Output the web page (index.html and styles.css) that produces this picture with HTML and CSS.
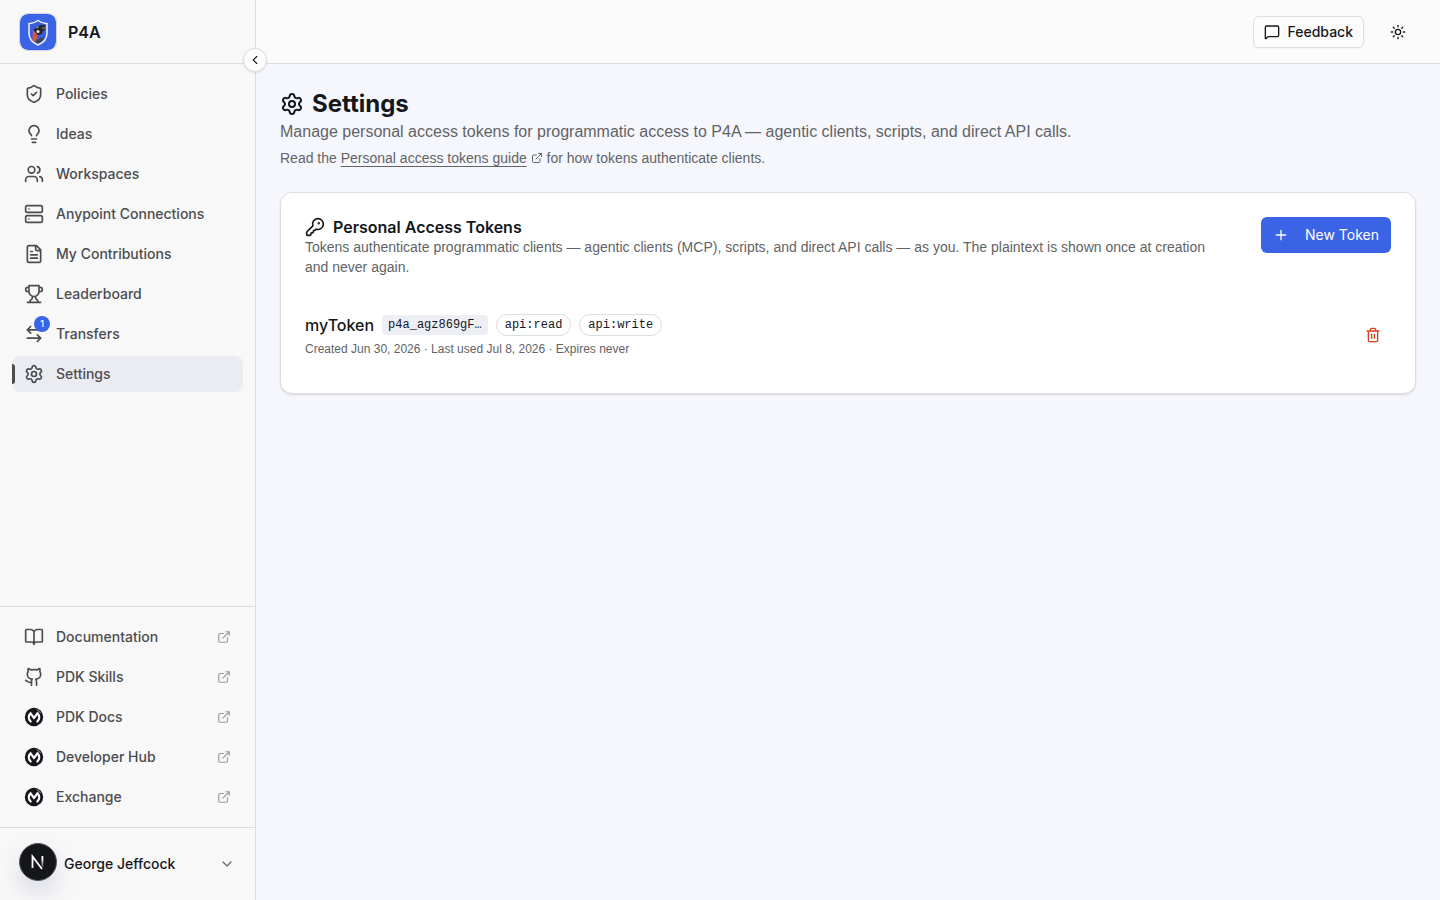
FILE: index.html
```html
<!DOCTYPE html>
<html lang="en">
<head>
  <meta charset="UTF-8" />
  <meta name="viewport" content="width=device-width, initial-scale=1.0" />
  <title>Settings - P4A</title>
  <link rel="stylesheet" href="styles.css">
</head>
<body>
  <!-- shared icons -->
  <svg class="sprite" aria-hidden="true">
    <symbol id="external" viewBox="0 0 24 24">
      <path d="M15 3h6v6M10 14 21 3M18 13v6a2 2 0 0 1-2 2H5a2 2 0 0 1-2-2V8a2 2 0 0 1 2-2h6" />
    </symbol>
    <symbol id="gear" viewBox="0 0 24 24">
      <path d="M9.671 4.136a2.34 2.34 0 0 1 4.659 0 2.34 2.34 0 0 0 3.319 1.915 2.34 2.34 0 0 1 2.33 4.033 2.34 2.34 0 0 0 0 3.831 2.34 2.34 0 0 1-2.33 4.033 2.34 2.34 0 0 0-3.319 1.915 2.34 2.34 0 0 1-4.659 0 2.34 2.34 0 0 0-3.32-1.915 2.34 2.34 0 0 1-2.33-4.033 2.34 2.34 0 0 0 0-3.831A2.34 2.34 0 0 1 6.35 6.051a2.34 2.34 0 0 0 3.319-1.915" />
      <circle cx="12" cy="12" r="3" />
    </symbol>
    <symbol id="mulesoft" viewBox="0 0 24 24">
      <circle cx="12" cy="12" r="11" fill="#15171c" stroke="none" />
      <path d="M8 17.4A6.8 6.8 0 0 1 7.8 7.4L12 13.4l4.2-6a6.8 6.8 0 0 1-.2 10" fill="none" stroke="#fff" stroke-width="2.6" />
      <path d="M16 3.6a9 9 0 0 1 3.6 3.2" fill="none" stroke="#fff" stroke-width="0.8" />
    </symbol>
  </svg>

  <div class="app">
    <aside class="sidebar">
      <div class="brand">
        <svg class="logo" viewBox="0 0 36 36">
          <rect width="36" height="36" rx="8" fill="#3b63e6" />
          <path d="M18 6.5c3 2.2 6 3 9 3.2V19c0 6-4 10-9 12-5-2-9-6-9-12V9.7c3-.2 6-1 9-3.2z" fill="#3b5fdc" stroke="#f2f3f5" stroke-width="1.5" />
          <path d="M13 17l3-2 1 9-2 4-2.5-2z" fill="#e3532d" />
          <path d="M14 15l4-2 2-2h5v5l-2 1-1 3-4 1-4-4z" fill="#25282c" />
          <path d="M15 28l3-3 6-2-2 4-4 2.5z" fill="#3f4446" />
          <circle cx="18" cy="17.5" r="1.5" fill="#e8e8e8" />
          <path d="M16 14l3-1M22 14h3" stroke="#8d9296" />
        </svg>
        <span>P4A</span>
      </div>
      <button class="collapse" aria-label="Collapse sidebar">
        <svg class="icon" viewBox="0 0 24 24"><path d="m15 18-6-6 6-6" /></svg>
      </button>

      <nav class="nav main-nav" aria-label="Main">
        <a href="#"><svg class="icon" viewBox="0 0 24 24"><path d="M20 13c0 5-3.5 7.5-7.66 8.95a1 1 0 0 1-.67-.01C7.5 20.5 4 18 4 13V6a1 1 0 0 1 1-1c2 0 4.5-1.2 6.24-2.72a1.17 1.17 0 0 1 1.52 0C14.51 3.81 17 5 19 5a1 1 0 0 1 1 1z" /><path d="m9 12 2 2 4-4" /></svg>Policies</a>
        <a href="#"><svg class="icon" viewBox="0 0 24 24"><path d="M15 14c.2-1 .7-1.7 1.5-2.5 1-.9 1.5-2.2 1.5-3.5A6 6 0 0 0 6 8c0 1 .2 2.2 1.5 3.5.7.7 1.3 1.5 1.5 2.5M9 18h6M10 22h4" /></svg>Ideas</a>
        <a href="#"><svg class="icon" viewBox="0 0 24 24"><path d="M16 21v-2a4 4 0 0 0-4-4H6a4 4 0 0 0-4 4v2" /><circle cx="9" cy="7" r="4" /><path d="M22 21v-2a4 4 0 0 0-3-3.87M16 3.13a4 4 0 0 1 0 7.75" /></svg>Workspaces</a>
        <a href="#"><svg class="icon" viewBox="0 0 24 24"><rect width="20" height="8" x="2" y="2" rx="2" /><rect width="20" height="8" x="2" y="14" rx="2" /><path d="M6 6h.01M6 18h.01" /></svg>Anypoint Connections</a>
        <a href="#"><svg class="icon" viewBox="0 0 24 24"><path d="M15 2H6a2 2 0 0 0-2 2v16a2 2 0 0 0 2 2h12a2 2 0 0 0 2-2V7zM14 2v4a2 2 0 0 0 2 2h4M10 9H8M16 13H8M16 17H8" /></svg>My Contributions</a>
        <a href="#"><svg class="icon" viewBox="0 0 24 24"><path d="M6 9H4.5a2.5 2.5 0 0 1 0-5H6M18 9h1.5a2.5 2.5 0 0 0 0-5H18M4 22h16M10 14.66V17c0 .55-.47.98-.97 1.21C7.85 18.75 7 20.24 7 22M14 14.66V17c0 .55.47.98.97 1.21C16.15 18.75 17 20.24 17 22M18 2H6v7a6 6 0 0 0 12 0V2Z" /></svg>Leaderboard</a>
        <a href="#"><span class="icon-wrap"><svg class="icon" viewBox="0 0 24 24"><path d="M8 3 4 7l4 4M4 7h16M16 21l4-4-4-4M20 17H4" /></svg><span class="count">1</span></span>Transfers</a>
        <a href="#" class="active" aria-current="page"><svg class="icon"><use href="#gear" /></svg>Settings</a>
      </nav>

      <nav class="nav links" aria-label="Resources">
        <a href="#"><svg class="icon" viewBox="0 0 24 24"><path d="M12 7v14M3 18a1 1 0 0 1-1-1V4a1 1 0 0 1 1-1h5a4 4 0 0 1 4 4 4 4 0 0 1 4-4h5a1 1 0 0 1 1 1v13a1 1 0 0 1-1 1h-6a3 3 0 0 0-3 3 3 3 0 0 0-3-3z" /></svg>Documentation<svg class="icon ext"><use href="#external" /></svg></a>
        <a href="#"><svg class="icon" viewBox="0 0 24 24"><path d="M15 22v-4a4.8 4.8 0 0 0-1-3.5c3 0 6-2 6-5.5.08-1.25-.27-2.48-1-3.5.28-1.15.28-2.35 0-3.5 0 0-1 0-3 1.5-2.64-.5-5.36-.5-8 0C6 2 5 2 5 2c-.3 1.15-.3 2.35 0 3.5A5.4 5.4 0 0 0 4 9c0 3.5 3 5.5 6 5.5-.39.49-.68 1.05-.85 1.65S8.93 17.38 9 18v4" /><path d="M9 18c-4.51 2-5-2-7-2" /></svg>PDK Skills<svg class="icon ext"><use href="#external" /></svg></a>
        <a href="#"><svg class="icon"><use href="#mulesoft" /></svg>PDK Docs<svg class="icon ext"><use href="#external" /></svg></a>
        <a href="#"><svg class="icon"><use href="#mulesoft" /></svg>Developer Hub<svg class="icon ext"><use href="#external" /></svg></a>
        <a href="#"><svg class="icon"><use href="#mulesoft" /></svg>Exchange<svg class="icon ext"><use href="#external" /></svg></a>
      </nav>

      <div class="account">
        <button class="user">
          George Jeffcock
          <svg class="icon" viewBox="0 0 24 24"><path d="m6 9 6 6 6-6" /></svg>
        </button>
      </div>
    </aside>

    <div class="page">
      <header class="topbar">
        <button class="feedback"><svg class="icon" viewBox="0 0 24 24"><path d="M22 17a2 2 0 0 1-2 2H6.828a2 2 0 0 0-1.414.586l-2.202 2.202A.71.71 0 0 1 2 21.286V5a2 2 0 0 1 2-2h16a2 2 0 0 1 2 2z" /></svg>Feedback</button>
        <button class="theme" aria-label="Toggle theme"><svg class="icon" viewBox="0 0 24 24"><circle cx="12" cy="12" r="4" /><path d="M12 2v2M12 20v2M4.93 4.93l1.41 1.41M17.66 17.66l1.41 1.41M2 12h2M20 12h2M6.34 17.66l-1.41 1.41M19.07 4.93l-1.41 1.41" /></svg></button>
      </header>

      <main>
        <h1><svg class="icon"><use href="#gear" /></svg>Settings</h1>
        <p class="lead">Manage personal access tokens for programmatic access to P4A — agentic clients, scripts, and direct API calls.</p>
        <p class="guide">Read the <a href="#">Personal access tokens guide</a> <svg class="icon"><use href="#external" /></svg> for how tokens authenticate clients.</p>

        <section class="card">
          <div class="card-header">
            <div>
              <h2><svg class="icon" viewBox="0 0 24 24"><path d="M2.586 17.414A2 2 0 0 0 2 18.828V21a1 1 0 0 0 1 1h3a1 1 0 0 0 1-1v-1a1 1 0 0 1 1-1h1a1 1 0 0 0 1-1v-1a1 1 0 0 1 1-1h.172a2 2 0 0 0 1.414-.586l.814-.814a6.5 6.5 0 1 0-4-4z" /><circle cx="16.5" cy="7.5" r=".5" fill="currentColor" /></svg>Personal Access Tokens</h2>
              <p>Tokens authenticate programmatic clients — agentic clients (MCP), scripts, and direct API calls — as you. The plaintext is shown once at creation and never again.</p>
            </div>
            <button class="primary"><svg class="icon" viewBox="0 0 24 24"><path d="M5 12h14M12 5v14" /></svg>New Token</button>
          </div>

          <div class="token">
            <div>
              <div class="token-name">
                <span>myToken</span>
                <code>p4a_agz869gF…</code>
                <span class="scope">api:read</span>
                <span class="scope">api:write</span>
              </div>
              <p>Created Jun 30, 2026 · Last used Jul 8, 2026 · Expires never</p>
            </div>
            <button class="delete" aria-label="Delete myToken"><svg class="icon" viewBox="0 0 24 24"><path d="M3 6h18M19 6v14a2 2 0 0 1-2 2H7a2 2 0 0 1-2-2V6M8 6V4a2 2 0 0 1 2-2h4a2 2 0 0 1 2 2v2M10 11v6M14 11v6" /></svg></button>
          </div>
        </section>
      </main>
    </div>
  </div>

  <!-- dev tools badge, floats over the page -->
  <button class="dev-badge" aria-label="Open dev tools">
    <svg viewBox="0 0 38 38">
      <defs><linearGradient id="fade" x1="0" y1="0" x2="0" y2="1"><stop offset="0.3" stop-color="#fff" /><stop offset="1" stop-color="#fff" stop-opacity="0.2" /></linearGradient></defs>
      <circle cx="19" cy="19" r="18.5" fill="#15161a" stroke="#55575b" />
      <path d="M13.5 25V13.5L23 26" fill="none" stroke="#fff" stroke-width="1.8" />
      <rect x="22.5" y="13" width="1.8" height="11" fill="url(#fade)" />
    </svg>
  </button>
</body>
</html>
```

FILE: styles.css
```css
* {
  box-sizing: border-box;
}
body {
  margin: 0;
  font-family: Inter, "Liberation Sans", sans-serif;
  font-size: 14px;
  line-height: 20px;
  color: #15171c;
  background-color: #f6f7fd;
}
h1, h2, p {
  margin: 0;
}
p {
  font-family: "Liberation Sans", Arial, sans-serif;
}
a {
  color: inherit;
}
button {
  display: flex;
  align-items: center;
  justify-content: center;
  padding: 0;
  font-family: inherit;
  font-size: 14px;
  line-height: 20px;
  font-weight: 500;
  color: inherit;
  background: none;
  border: none;
  cursor: pointer;
}
.sprite {
  display: none;
}
.icon {
  width: 16px;
  height: 16px;
  flex-shrink: 0;
  fill: none;
  stroke: currentColor;
  stroke-width: 2;
  stroke-linecap: round;
  stroke-linejoin: round;
}
.app {
  display: flex;
  min-height: 100vh;
}

/* sidebar */
.sidebar {
  position: relative;
  display: flex;
  flex-direction: column;
  width: 256px;
  flex-shrink: 0;
  background-color: #f8f8f8;
  border-right: 1px solid #dcdde0;
}
.brand {
  display: flex;
  align-items: center;
  gap: 12px;
  height: 64px;
  padding: 0 20px;
  font-size: 16px;
  font-weight: 600;
  border-bottom: 1px solid #dcdde0;
}
.logo {
  width: 36px;
  height: 36px;
  border-radius: 8px;
  box-shadow: 0 0 0 1px #d3d6e2;
}
.collapse {
  position: absolute;
  top: 48px;
  right: -12px;
  width: 24px;
  height: 24px;
  background-color: #fcfcfc;
  border: 1px solid #dcdde0;
  border-radius: 50%;
  box-shadow: 0 1px 2px #0000001a;
}
.collapse .icon {
  width: 14px;
  height: 14px;
}
.nav {
  display: flex;
  flex-direction: column;
  gap: 4px;
  padding: 12px;
}
.main-nav {
  flex: 1;
}
.nav a {
  position: relative;
  display: flex;
  align-items: center;
  gap: 12px;
  height: 36px;
  padding: 0 12px;
  font-weight: 500;
  color: #4b4c50;
  text-decoration: none;
  border-radius: 8px;
}
.nav .icon {
  width: 20px;
  height: 20px;
}
.nav .active {
  background-color: #ebecf2;
  overflow: hidden;
}
.nav .active::before {
  content: "";
  position: absolute;
  left: 0;
  top: 8px;
  width: 3px;
  height: 20px;
  background-color: #4b4c50;
  border-radius: 0 4px 4px 0;
}
.nav .ext {
  width: 14px;
  height: 14px;
  margin-left: auto;
  color: #98999c;
}
.icon-wrap {
  position: relative;
  display: flex;
}
.count {
  position: absolute;
  top: -8px;
  right: -6px;
  width: 16px;
  height: 16px;
  font-size: 9px;
  line-height: 16px;
  text-align: center;
  color: #fff;
  background-color: #3b63e6;
  border-radius: 50%;
}
.links, .account {
  border-top: 1px solid #dcdde0;
}
.account {
  padding: 14px 20px;
}
.user {
  justify-content: space-between;
  width: 100%;
  height: 44px;
  padding-left: 44px;
}
.user .icon {
  color: #6a6b6e;
}
.dev-badge {
  position: fixed;
  left: 19px;
  bottom: 19px;
  width: 38px;
  height: 38px;
  border-radius: 50%;
  box-shadow: 0 12px 24px #4b5ba02e;
}

/* page */
.page {
  flex: 1;
  min-width: 0;
}
.topbar {
  display: flex;
  align-items: center;
  justify-content: flex-end;
  gap: 16px;
  height: 64px;
  padding: 0 24px;
  background-color: #fbfbfc;
  border-bottom: 1px solid #dcdde0;
}
.feedback {
  gap: 8px;
  height: 32px;
  padding: 0 10px;
  background-color: #fcfcfd;
  border: 1px solid #dcdde0;
  border-radius: 6px;
  box-shadow: 0 1px 2px #0000000d;
}
.theme {
  width: 36px;
  height: 36px;
}
main {
  padding: 24px;
}
h1 {
  display: flex;
  align-items: center;
  gap: 8px;
  font-size: 24px;
  line-height: 32px;
  font-weight: 700;
}
h1 .icon {
  width: 24px;
  height: 24px;
}
.lead {
  font-size: 16px;
  line-height: 24px;
  color: #626366;
}
.guide {
  margin-top: 4px;
  color: #626366;
}
.guide a {
  text-underline-offset: 3px;
}
.guide .icon {
  width: 12px;
  height: 12px;
  vertical-align: -1px;
}
.card {
  display: flex;
  flex-direction: column;
  gap: 24px;
  margin-top: 24px;
  padding: 24px;
  background-color: #fff;
  border: 1px solid #dcdde0;
  border-radius: 12px;
  box-shadow: 0 1px 2px #0000001f;
}
.card-header {
  display: flex;
  align-items: flex-start;
  justify-content: space-between;
  gap: 40px;
}
h2 {
  display: flex;
  align-items: center;
  gap: 8px;
  font-size: 16px;
  line-height: 20px;
  font-weight: 600;
}
h2 .icon {
  width: 20px;
  height: 20px;
}
.card p {
  color: #626366;
}
.primary {
  flex-shrink: 0;
  gap: 16px;
  height: 36px;
  padding: 0 12px;
  font-weight: 400;
  color: #fff;
  background-color: #3b63e6;
  border-radius: 6px;
}
.token {
  display: flex;
  align-items: center;
  justify-content: space-between;
  padding: 12px 0;
}
.token-name {
  display: flex;
  align-items: center;
  gap: 8px;
  font-size: 16px;
  line-height: 24px;
  font-weight: 500;
}
.token-name code, .scope {
  font-family: "Liberation Mono", monospace;
  font-size: 12px;
  line-height: 20px;
}
.token-name code {
  padding: 0 6px;
  font-weight: 400;
  background-color: #eeeff5;
  border-radius: 4px;
}
.scope {
  padding: 0 8px;
  border: 1px solid #dcdde0;
  border-radius: 11px;
}
.card .token p {
  margin-top: 4px;
  font-size: 12px;
  line-height: 16px;
}
.delete {
  width: 36px;
  height: 36px;
  color: #d9411e;
}
```
